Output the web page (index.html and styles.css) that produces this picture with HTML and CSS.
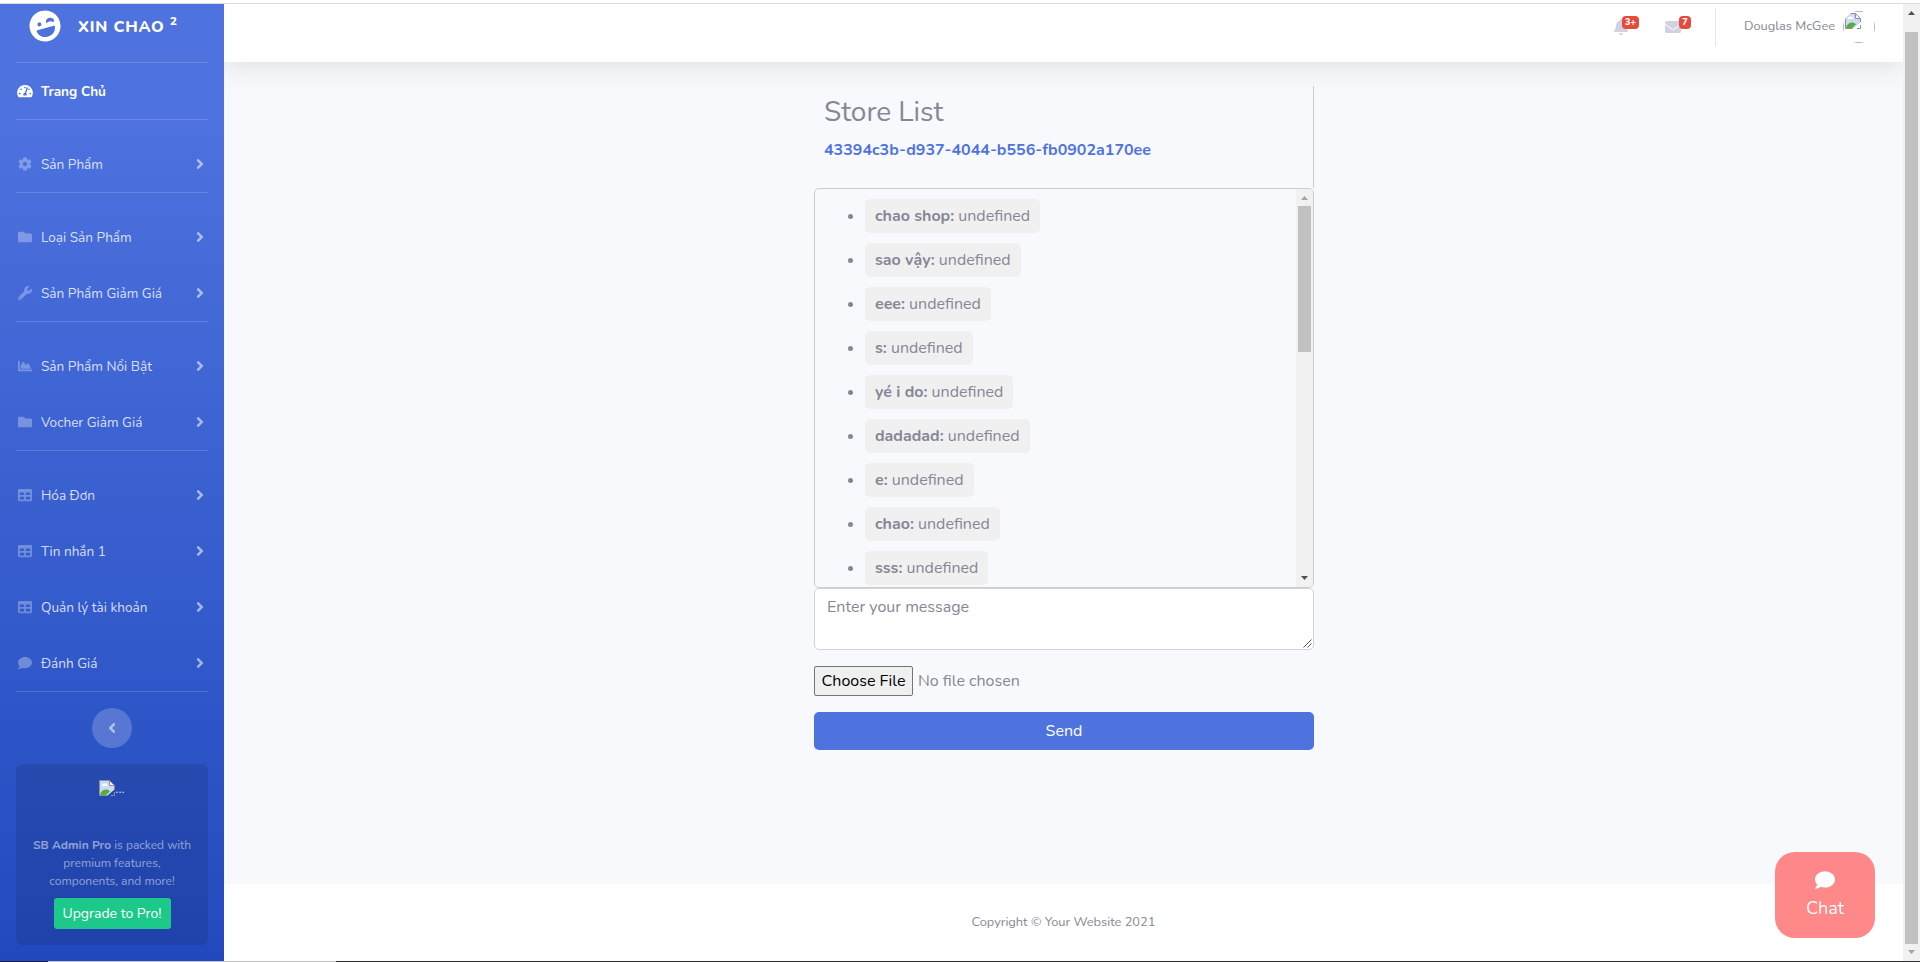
FILE: index.html
```html
<!DOCTYPE html>
<html lang="vi">
<head>
<meta charset="utf-8">
<title>Store List</title>
<link rel="stylesheet" href="styles.css">
</head>
<body>
<svg class="sprite" aria-hidden="true">
  <symbol id="angle-right" viewBox="0 0 256 512"><path d="M224.3 273l-136 136c-9.4 9.4-24.6 9.4-33.9 0l-22.6-22.6c-9.4-9.4-9.4-24.6 0-33.9l96.4-96.4-96.4-96.4c-9.4-9.4-9.4-24.6 0-33.9L54.3 103c9.4-9.4 24.6-9.4 33.9 0l136 136c9.5 9.4 9.5 24.6.1 34z"/></symbol>
  <symbol id="comment" viewBox="0 0 512 512"><path d="M256 32C114.6 32 0 125.1 0 240c0 49.6 21.4 95 57 130.7C44.5 421.1 2.7 466 2.2 466.5c-2.2 2.3-2.8 5.7-1.5 8.7S4.8 480 8 480c66.3 0 116-31.8 140.6-51.4 32.7 12.3 69 19.4 107.4 19.4 141.4 0 256-93.1 256-208S397.4 32 256 32z"/></symbol>
  <symbol id="folder" viewBox="0 0 512 512"><path d="M464 128H272l-64-64H48C21.49 64 0 85.49 0 112v288c0 26.51 21.49 48 48 48h416c26.51 0 48-21.49 48-48V176c0-26.51-21.49-48-48-48z"/></symbol>
  <symbol id="wrench" viewBox="0 0 512 512"><path d="M507.73 109.1c-2.24-9.03-13.54-12.09-20.12-5.51l-74.36 74.36-67.88-11.31-11.31-67.88 74.36-74.36c6.62-6.62 3.43-17.9-5.66-20.16-47.38-11.74-99.55.91-136.58 37.93-39.64 39.64-50.55 97.1-34.05 147.2L18.74 402.76c-24.99 24.99-24.99 65.51 0 90.5 24.99 24.99 65.51 24.99 90.5 0l213.21-213.21c50.12 16.71 107.47 5.68 147.37-34.22 37.07-37.07 49.7-89.32 37.91-136.73zM64 472c-13.25 0-24-10.75-24-24 0-13.26 10.75-24 24-24s24 10.74 24 24c0 13.25-10.75 24-24 24z"/></symbol>
  <symbol id="cog" viewBox="0 0 512 512"><path d="M487.4 315.7l-42.6-24.6c4.3-23.2 4.3-47 0-70.2l42.6-24.6c4.9-2.8 7.1-8.6 5.5-14-11.1-35.6-30-67.8-54.7-94.6-3.8-4.1-10-5.1-14.8-2.3L380.8 110c-17.9-15.4-38.5-27.3-60.8-35.1V25.8c0-5.6-3.9-10.5-9.4-11.7-36.7-8.2-74.3-7.8-109.2 0-5.5 1.2-9.4 6.1-9.4 11.7V75c-22.2 7.9-42.8 19.8-60.8 35.1L88.7 85.5c-4.9-2.8-11-1.9-14.8 2.3-24.7 26.7-43.6 58.9-54.7 94.6-1.7 5.4.6 11.2 5.5 14L67.3 221c-4.3 23.2-4.3 47 0 70.2l-42.6 24.6c-4.9 2.8-7.1 8.6-5.5 14 11.1 35.6 30 67.8 54.7 94.6 3.8 4.1 10 5.1 14.8 2.3l42.6-24.6c17.9 15.4 38.5 27.3 60.8 35.1v49.2c0 5.6 3.9 10.5 9.4 11.7 36.7 8.2 74.3 7.8 109.2 0 5.5-1.2 9.4-6.1 9.4-11.7v-49.2c22.2-7.9 42.8-19.8 60.8-35.1l42.6 24.6c4.9 2.8 11 1.9 14.8-2.3 24.7-26.7 43.6-58.9 54.7-94.6 1.5-5.5-.7-11.3-5.6-14.1zM256 336c-44.1 0-80-35.9-80-80s35.9-80 80-80 80 35.9 80 80-35.9 80-80 80z"/></symbol>
  <symbol id="chart" viewBox="0 0 512 512"><path d="M500 384c6.6 0 12 5.4 12 12v40c0 6.6-5.4 12-12 12H12c-6.6 0-12-5.4-12-12V76c0-6.6 5.4-12 12-12h40c6.6 0 12 5.4 12 12v308h436zM372.7 159.5L288 216l-85.3-113.7c-5.1-6.8-15.5-6.3-19.9 1L96 248v104h384l-89.9-187.8c-3.2-6.5-11.4-8.7-17.4-4.7z"/></symbol>
  <symbol id="table" viewBox="0 0 512 512"><path d="M464 32H48C21.49 32 0 53.49 0 80v352c0 26.51 21.49 48 48 48h416c26.51 0 48-21.49 48-48V80c0-26.51-21.49-48-48-48zM224 416H64v-96h160v96zm0-160H64v-96h160v96zm224 160H288v-96h160v96zm0-160H288v-96h160v96z"/></symbol>
  <symbol id="tachometer" viewBox="0 0 576 512"><path d="M288 32C128.94 32 0 160.94 0 320c0 52.8 14.25 102.26 39.06 144.8 5.61 9.62 16.3 15.2 27.44 15.2h443c11.14 0 21.83-5.58 27.44-15.2C561.75 422.26 576 372.8 576 320c0-159.06-128.94-288-288-288zm0 64c14.71 0 26.58 10.13 30.32 23.65-1.11 2.26-2.64 4.23-3.45 6.67l-9.22 27.67c-5.13 3.49-10.97 6.01-17.64 6.01-17.67 0-32-14.33-32-32S270.33 96 288 96zM96 384c-17.67 0-32-14.33-32-32s14.33-32 32-32 32 14.33 32 32-14.33 32-32 32zm48-160c-17.67 0-32-14.33-32-32s14.33-32 32-32 32 14.33 32 32-14.33 32-32 32zm246.77-72.41l-61.33 184C343.13 347.33 352 364.54 352 384c0 11.72-3.38 22.55-8.88 32H232.88c-5.5-9.45-8.88-20.28-8.88-32 0-33.94 26.5-61.43 59.9-63.59l61.34-184.01c4.17-12.56 17.73-19.45 30.36-15.17 12.57 4.19 19.35 17.79 15.17 30.36zm14.66 57.2l15.52-46.55c3.47-1.29 7.13-2.23 11.05-2.23 17.67 0 32 14.33 32 32s-14.33 32-32 32c-11.38-.01-20.89-6.28-26.57-15.22zM480 384c-17.67 0-32-14.33-32-32s14.33-32 32-32 32 14.33 32 32-14.33 32-32 32z"/></symbol>
  <symbol id="bell" viewBox="0 0 448 512"><path d="M224 512c35.32 0 63.97-28.65 63.97-64H160.03c0 35.35 28.65 64 63.97 64zm215.39-149.71c-19.32-20.76-55.47-51.99-55.47-154.29 0-77.7-54.48-139.9-127.94-155.16V32c0-17.67-14.32-32-31.98-32s-31.98 14.33-31.98 32v20.84C118.56 68.1 64.08 130.3 64.08 208c0 102.3-36.15 133.53-55.47 154.29-6 6.45-8.66 14.16-8.61 21.71.11 16.4 12.98 32 32.1 32h383.8c19.12 0 32-15.6 32.1-32 .05-7.55-2.61-15.27-8.61-21.71z"/></symbol>
  <symbol id="envelope" viewBox="0 0 512 512"><path d="M502.3 190.8c3.9-3.1 9.7-.2 9.7 4.7V400c0 26.5-21.5 48-48 48H48c-26.5 0-48-21.5-48-48V195.6c0-5 5.7-7.8 9.7-4.7 22.4 17.4 52.1 39.5 154.1 113.6 21.1 15.4 56.7 47.8 92.2 47.6 35.7.3 72-32.8 92.3-47.6 102-74.1 131.6-96.3 154-113.7zM256 320c23.2.4 56.6-29.2 73.4-41.4 132.7-96.3 142.8-104.7 173.4-128.7 5.8-4.5 9.2-11.5 9.2-18.9v-19c0-26.5-21.5-48-48-48H48c-26.5 0-48 21.5-48 48v19c0 7.4 3.4 14.3 9.2 18.9 30.6 23.9 40.7 32.4 173.4 128.7 16.8 12.2 50.2 41.8 73.4 41.4z"/></symbol>
  <symbol id="laugh-wink" viewBox="0 0 496 512">
    <circle cx="248" cy="256" r="248"/>
    <g class="face-ink">
      <circle cx="168" cy="208" r="32"/>
      <path d="M388 225c-20-26-60-30-90-12-11 7-22-1-20-13 6-34 38-54 68-54s61 20 66 54c2 14-13 34-24 25z"/>
      <path d="M112 288h272c9 0 17 8 15 18-8 71-69 126-144 126h-14c-75 0-136-55-144-126-1-10 6-18 15-18z"/>
    </g>
  </symbol>
  <symbol id="broken" viewBox="0 0 16 16">
    <path d="M.5.5h10l5 5v4L8.5 15.5H.5z" fill="#c9dcf5"/>
    <path d="M2.5 6q.3-2 2-2 1-1.500 2.500 0 1.500 0 1.500 2z" fill="#fff"/>
    <path d="M1 15q1-5 5.500-5.500Q9.500 9 11 11.500L7 15z" fill="#5aac3c"/>
    <path d="M10.500.5v5h5z" fill="#fff"/>
    <path d="M7.500 15.500H.5V.5h10l5 5V9M10.500.5v5h5M12 15.500h3.500V12" fill="none" stroke="#8f8f8f"/>
  </symbol>
</svg>

<div class="window-edge"></div>
<div class="shell">
  <nav class="sidebar">
    <a class="brand">
      <svg class="brand-icon"><use href="#laugh-wink"/></svg>
      <span class="brand-text">XIN CHAO <sup>2</sup></span>
    </a>
    <hr>
    <a class="item active"><svg><use href="#tachometer"/></svg><span>Trang Chủ</span></a>
    <hr class="gap">
    <a class="item"><svg><use href="#cog"/></svg><span>Sản Phẩm</span><svg class="arrow"><use href="#angle-right"/></svg></a>
    <hr class="gap">
    <a class="item"><svg><use href="#folder"/></svg><span>Loại Sản Phẩm</span><svg class="arrow"><use href="#angle-right"/></svg></a>
    <a class="item"><svg><use href="#wrench"/></svg><span>Sản Phẩm Giảm Giá</span><svg class="arrow"><use href="#angle-right"/></svg></a>
    <hr class="gap">
    <a class="item"><svg><use href="#chart"/></svg><span>Sản Phẩm Nổi Bật</span><svg class="arrow"><use href="#angle-right"/></svg></a>
    <a class="item"><svg><use href="#folder"/></svg><span>Vocher Giảm Giá</span><svg class="arrow"><use href="#angle-right"/></svg></a>
    <hr class="gap">
    <a class="item"><svg><use href="#table"/></svg><span>Hóa Đơn</span><svg class="arrow"><use href="#angle-right"/></svg></a>
    <a class="item"><svg><use href="#table"/></svg><span>Tin nhắn 1</span><svg class="arrow"><use href="#angle-right"/></svg></a>
    <a class="item"><svg><use href="#table"/></svg><span>Quản lý tài khoản</span><svg class="arrow"><use href="#angle-right"/></svg></a>
    <a class="item"><svg><use href="#comment"/></svg><span>Đánh Giá</span><svg class="arrow"><use href="#angle-right"/></svg></a>
    <hr class="gap">
    <button class="toggle"><svg><use href="#angle-right"/></svg></button>
    <div class="promo">
      <div class="promo-img"><svg><use href="#broken"/></svg><span>...</span></div>
      <p><strong>SB Admin Pro</strong> is packed with premium features, components, and more!</p>
      <a class="upgrade">Upgrade to Pro!</a>
    </div>
  </nav>

  <div class="content">
    <header class="topbar">
      <div class="alert"><svg class="bell"><use href="#bell"/></svg><span class="badge">3+</span></div>
      <div class="alert mail"><svg><use href="#envelope"/></svg><span class="badge">7</span></div>
      <div class="divider"></div>
      <span class="user">Douglas McGee</span>
      <div class="avatar"><svg><use href="#broken"/></svg></div>
    </header>
    <main>
      <section class="chat">
        <div class="store">
          <h3>Store List</h3>
          <a>43394c3b-d937-4044-b556-fb0902a170ee</a>
        </div>
        <div class="messages">
          <ul>
            <li><span class="msg"><b>chao shop:</b> undefined</span></li>
            <li><span class="msg"><b>sao vậy:</b> undefined</span></li>
            <li><span class="msg"><b>eee:</b> undefined</span></li>
            <li><span class="msg"><b>s:</b> undefined</span></li>
            <li><span class="msg"><b>yé i do:</b> undefined</span></li>
            <li><span class="msg"><b>dadadad:</b> undefined</span></li>
            <li><span class="msg"><b>e:</b> undefined</span></li>
            <li><span class="msg"><b>chao:</b> undefined</span></li>
            <li><span class="msg"><b>sss:</b> undefined</span></li>
          </ul>
          <div class="scroll">
            <svg class="dim" viewBox="0 0 7 4"><path d="M0 4L3.500 0 7 4z"/></svg>
            <div class="track"><div class="thumb short"></div></div>
            <svg viewBox="0 0 7 4"><path d="M0 0h7L3.500 4z"/></svg>
          </div>
        </div>
        <div class="field">Enter your message
          <svg class="grip" viewBox="0 0 9 9"><path d="M.5 8.500l8-8M4.500 8.500l4-4" fill="none" stroke="#555"/></svg>
        </div>
        <div class="file"><button>Choose File</button><span>No file chosen</span></div>
        <button class="send">Send</button>
      </section>
    </main>
    <footer>Copyright © Your Website 2021</footer>
  </div>

  <div class="scroll page">
    <svg viewBox="0 0 7 4"><path d="M0 4L3.500 0 7 4z"/></svg>
    <div class="track"><div class="thumb"></div></div>
    <svg class="dim" viewBox="0 0 7 4"><path d="M0 0h7L3.500 4z"/></svg>
  </div>
</div>
<div class="taskbar"></div>
<a class="chat-button"><svg><use href="#comment"/></svg><span>Chat</span></a>
</body>
</html>
```
FILE: styles.css
```css
* { box-sizing: border-box; }
body {
  margin: 0;
  height: 962px;
  overflow: hidden;
  display: flex;
  flex-direction: column;
  font-family: "Nunito", "Lato", "Open Sans", sans-serif;
  font-size: 16px;
  line-height: 24px;
  color: #858796;
  background: #fff;
}
button { font: inherit; }
svg { fill: currentColor; display: block; flex: none; }
.sprite { position: absolute; width: 0; height: 0; }
.face-ink { fill: #4e73df; }

.window-edge { height: 4px; flex: none; border-bottom: 1px solid #dcdcdc; }
.shell { flex: 1; min-height: 0; display: flex; }
.taskbar {
  height: 1px;
  flex: none;
  background: linear-gradient(90deg, #1b2036 48px, #c0c0c0 48px, #c0c0c0 336px, #2f2e33 336px);
}

/* Sidebar */
.sidebar {
  width: 224px;
  flex: none;
  display: flex;
  flex-direction: column;
  color: #fff;
  background: linear-gradient(180deg, #4e73df 10%, #224abe 100%);
}
.brand { height: 58px; flex: none; display: flex; align-items: flex-start; padding: 6px 0 0 29px; }
.brand-icon { width: 32px; height: 32px; transform: rotate(-15deg); }
.brand-text { margin-left: 17px; padding-top: 5px; font-size: 16px; font-weight: 800; letter-spacing: .8px; white-space: nowrap; }
.brand-text sup { font-size: 12px; line-height: 0; position: relative; top: -1px; }
hr { width: 192px; height: 1px; flex: none; margin: 0 16px; border: 0; background: rgba(255, 255, 255, .16); }
hr.gap { margin-bottom: 16px; }
.item { height: 56px; flex: none; display: flex; align-items: center; padding: 0 16px; font-size: 13.6px; color: rgba(255, 255, 255, .8); }
.item span { padding-top: 2px; }
.item svg { width: 18px; height: 14px; margin-right: 7px; color: rgba(255, 255, 255, .3); }
.item.active { color: #fff; font-weight: 700; }
.item.active svg { color: #fff; }
.item svg.arrow { width: 8px; height: 16px; margin: 0 4px 0 auto; color: rgba(255, 255, 255, .55); }
.toggle { width: 40px; height: 40px; flex: none; align-self: center; display: grid; place-items: center; padding: 0; border: 0; border-radius: 50%; background: rgba(255, 255, 255, .2); color: rgba(255, 255, 255, .55); }
.toggle svg { width: 8px; height: 16px; transform: scaleX(-1); }
.promo { height: 181px; flex: none; margin: 16px 16px 0; padding: 16px; border-radius: 6px; background: rgba(0, 0, 0, .1); display: flex; flex-direction: column; align-items: center; text-align: center; font-size: 12px; line-height: 18px; color: rgba(255, 255, 255, .5); }
.promo-img { height: 56px; display: flex; font-size: 13.6px; color: rgba(255, 255, 255, .8); }
.promo-img svg { width: 16px; height: 16px; }
.promo p { margin: 0 0 8px; }
.upgrade { height: 31px; padding: 5px 9px; border-radius: 3px; background: #1cc88a; color: #fff; font-size: 14px; line-height: 21px; white-space: nowrap; }

/* Content */
.content { width: 1679px; display: flex; flex-direction: column; overflow: hidden; background: #f8f9fc; }
.topbar { height: 58px; flex: none; display: flex; align-items: flex-start; justify-content: flex-end; padding-right: 28px; background: #fff; box-shadow: 0 2.4px 28px rgba(58, 59, 69, .15); }
.alert { position: relative; margin-top: 15px; color: #d1d3e2; }
.alert svg { width: 16px; height: 16px; }
.alert .bell { width: 14px; }
.mail { margin-left: 37px; }
.badge { position: absolute; left: 8px; top: -3px; width: 17px; height: 13px; border-radius: 4px; background: #e74a3b; color: #fff; font-size: 9px; font-weight: 800; line-height: 13px; text-align: center; }
.mail .badge { left: 14px; width: 12px; }
.divider { width: 1px; height: 38px; margin: 4px 28px 0 34px; background: #e3e6f0; }
.user { margin: 10px 8px 0 0; font-size: 12.8px; }
.avatar { width: 32px; height: 32px; margin-top: 7px; padding: 1px; border: 1px solid #b5b5b5; clip-path: circle(16px); }
.avatar svg { width: 16px; height: 16px; }

main { flex: 1; padding-top: 24px; }
.chat { width: 500px; margin-left: 590px; display: flex; flex-direction: column; }
.store { height: 102px; padding: 9px 10px; border-right: 1px solid #ccc; }
h3 { margin: 0 0 9px; font-size: 28px; line-height: 34px; font-weight: 400; }
.store a { display: block; line-height: 24px; font-weight: 700; color: #4e73df; }
.messages { height: 400px; display: flex; border: 1px solid #ccc; border-radius: 5px; overflow: hidden; }
.messages ul { flex: 1; margin: 0; padding: 10px 0 0 50px; }
.messages li { height: 34px; margin-bottom: 10px; padding: 0; line-height: 34px; }
.msg { display: inline-block; padding: 5px 10px; line-height: 24px; border-radius: 5px; background: #f0f0f0; vertical-align: top; }
.field { position: relative; height: 62px; padding: 6px 12px; border: 1px solid #d1d3e2; border-radius: 5px; background: #fff; }
.grip { position: absolute; right: 1px; bottom: 1px; width: 9px; height: 9px; }
.file { margin: 16px 0; display: flex; align-items: center; gap: 5px; }
.file button { width: 99px; height: 30px; padding: 0; border: 1px solid #767676; border-radius: 2px; background: #efefef; color: #000; white-space: nowrap; }
.send { height: 38px; padding: 0; border: 0; border-radius: 5px; background: #4e73df; color: #fff; }
footer { height: 77px; flex: none; display: grid; place-items: center; padding-bottom: 2px; background: #fff; font-size: 12.8px; }

/* Scrollbars */
.scroll { width: 17px; flex: none; display: flex; flex-direction: column; align-items: center; justify-content: space-between; padding: 7px 0; background: #f1f1f1; }
.scroll svg { width: 7px; height: 4px; color: #505050; }
.scroll svg.dim { color: #a3a3a3; }
.track { flex: 1; width: 13px; padding: 6px 0; }
.thumb { height: 100%; background: #c1c1c1; }
.thumb.short { height: 146px; }
.page .track { padding-top: 17px; }

.chat-button { position: fixed; left: 1775px; top: 852px; width: 100px; height: 86px; border-radius: 20px; background: rgba(255, 107, 107, .8); color: #fff; display: flex; flex-direction: column; align-items: center; padding-top: 18px; font-size: 18px; }
.chat-button svg { width: 20px; height: 20px; margin-bottom: 6px; }
```
